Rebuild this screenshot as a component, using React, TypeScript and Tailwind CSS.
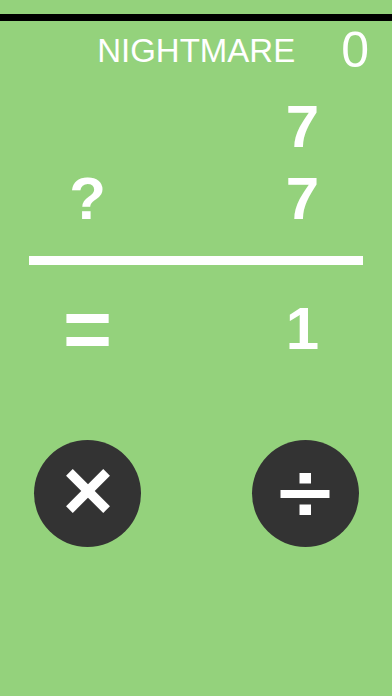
export default function App() {
  return (
    <div
      className="w-[392px] h-[696px] bg-[#94d27c] text-white flex flex-col overflow-hidden"
      style={{ fontFamily: '"Liberation Sans", Arial, sans-serif' }}
    >
      {/* top status strip */}
      <div className="h-[14px] shrink-0" />
      <div className="h-[7px] bg-black shrink-0" />

      {/* difficulty + score */}
      <div className="h-[58px] shrink-0 flex justify-end items-center gap-[46px] pr-[23px]">
        <span className="text-[33px] leading-none">NIGHTMARE</span>
        <span className="text-[50px] leading-none">0</span>
      </div>

      {/* equation */}
      <div className="mt-[18px] flex justify-between pl-[34px] pr-[36px] font-bold text-[60px] leading-[60px]">
        <div className="w-[107px] h-[60px] text-center" />
        <div className="w-[107px] h-[60px] text-center">7</div>
      </div>
      <div className="mt-[12px] flex justify-between pl-[34px] pr-[36px] font-bold text-[60px] leading-[60px]">
        <div className="w-[107px] h-[60px] text-center">?</div>
        <div className="w-[107px] h-[60px] text-center">7</div>
      </div>

      <div className="mt-[27px] mx-[29px] h-[9px] bg-white shrink-0" />

      <div className="mt-[34px] flex justify-between pl-[34px] pr-[36px] font-bold text-[60px] leading-[60px]">
        <div className="w-[107px] h-[60px] flex items-center justify-center">
          <span className="text-[84px] leading-none">=</span>
        </div>
        <div className="w-[107px] h-[60px] text-center">1</div>
      </div>

      {/* operator buttons */}
      <div className="mt-[81px] flex justify-between pl-[34px] pr-[33px]">
        <button className="w-[107px] h-[107px] rounded-full bg-[#333333] flex items-center justify-center">
          <svg width="107" height="107" viewBox="0 0 107 107">
            <line x1="35.4" y1="32.4" x2="72.6" y2="69.6" stroke="white" strokeWidth="9.5" />
            <line x1="72.6" y1="32.4" x2="35.4" y2="69.6" stroke="white" strokeWidth="9.5" />
          </svg>
        </button>
        <button className="w-[107px] h-[107px] rounded-full bg-[#333333] flex items-center justify-center">
          <svg width="107" height="107" viewBox="0 0 107 107">
            <rect x="47.5" y="33" width="11.5" height="10.5" fill="white" />
            <rect x="28.5" y="50" width="49" height="8" fill="white" />
            <rect x="47.5" y="64.5" width="11.5" height="10.5" fill="white" />
          </svg>
        </button>
      </div>
    </div>
  );
}
